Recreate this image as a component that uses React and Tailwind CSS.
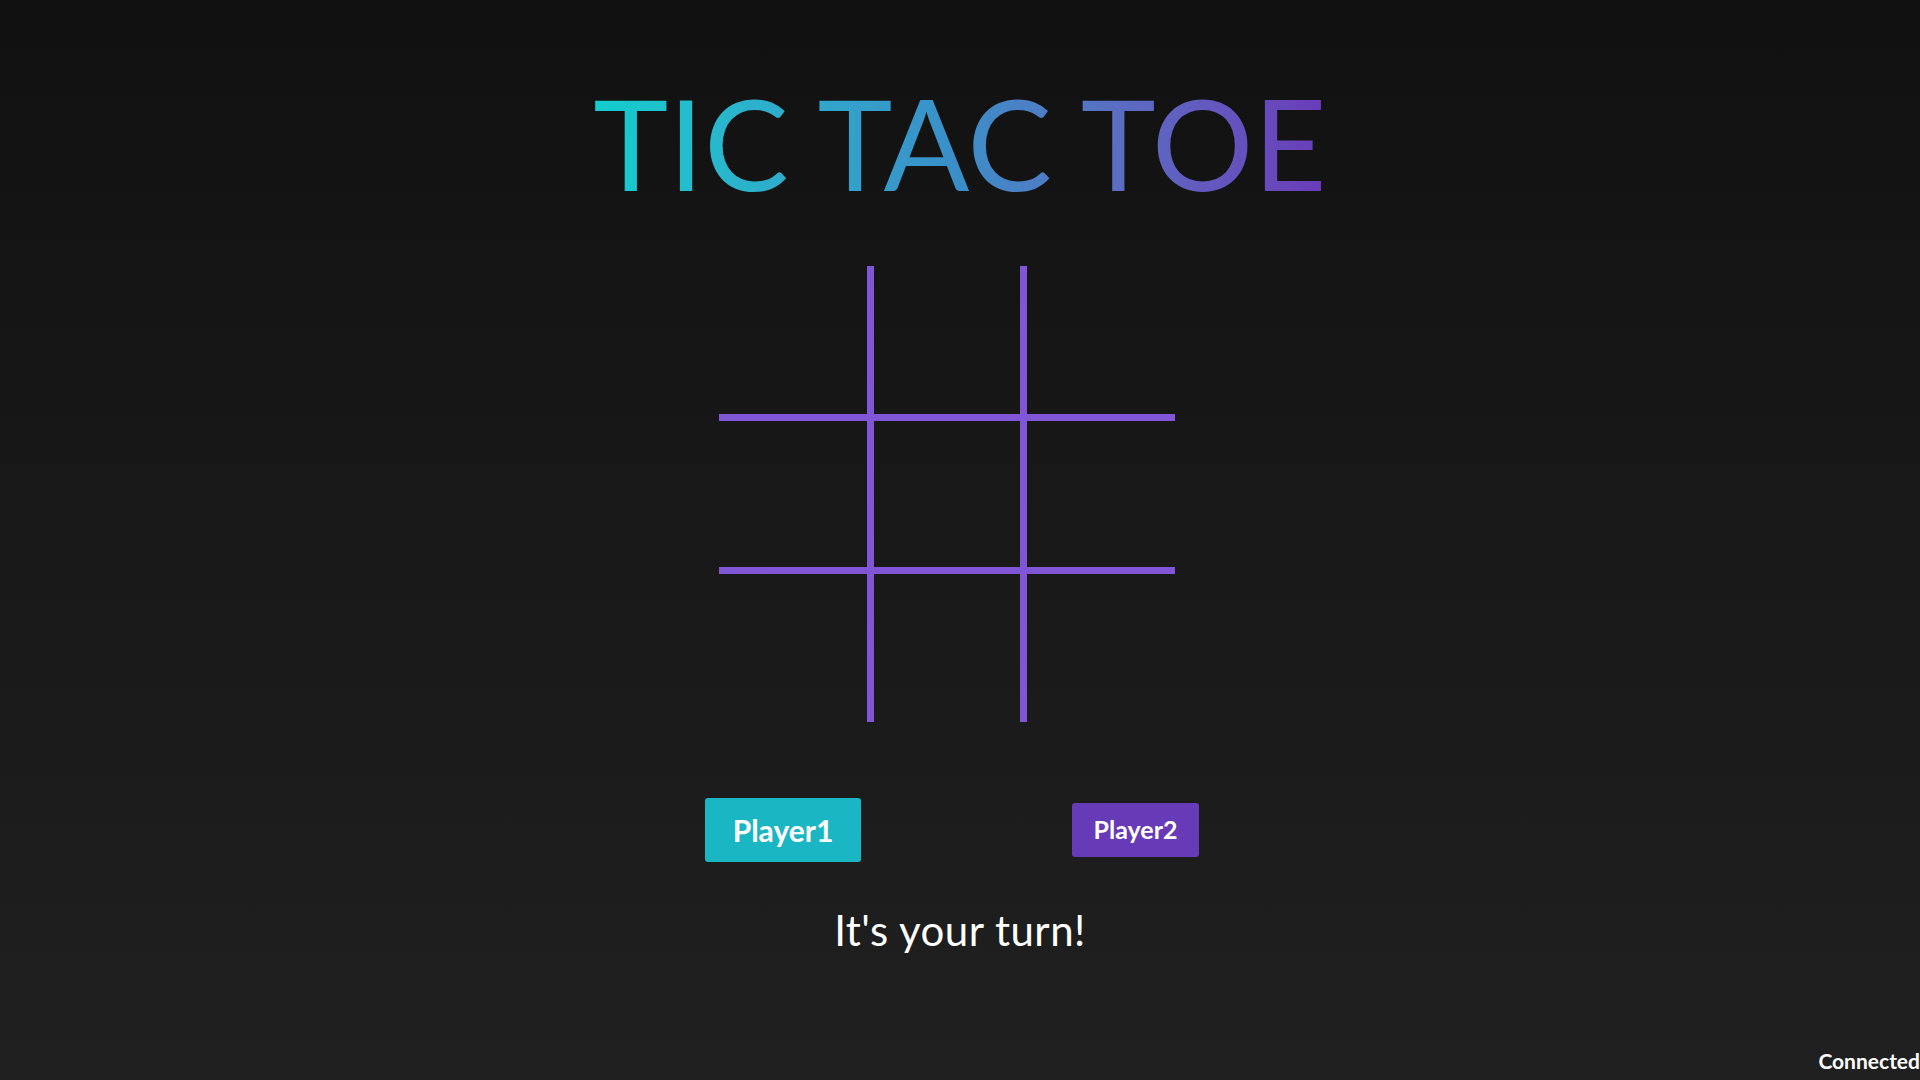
import React, { useState } from 'react';

const LINE = 'border-[#8156d6]';

export default function App() {
  const [board] = useState(Array(9).fill(null));
  const [turn] = useState('player1');

  const cellClass = (i) => {
    const row = Math.floor(i / 3);
    const col = i % 3;
    const w = col === 1 ? 'w-[146px]' : 'w-[148px]';
    const h = row === 1 ? 'h-[146px]' : 'h-[148px]';
    const br = col < 2 ? 'border-r-[7px]' : '';
    const bb = row < 2 ? 'border-b-[7px]' : '';
    return `${w} ${h} ${br} ${bb} ${LINE} box-content flex items-center justify-center`;
  };

  return (
    <div
      className="relative h-screen w-full overflow-hidden bg-linear-to-b from-[#111111] to-[#202020] text-white"
      style={{ fontFamily: 'Lato, "Noto Sans", sans-serif' }}
    >
      <div className="flex flex-col items-center">
        <h1 className="mt-[79px] w-fit bg-linear-to-r from-[#0fcdcd] via-[#3a8ec8] to-[#6a3ab9] bg-clip-text text-[127px] leading-none font-normal text-transparent">
          TIC TAC TOE
        </h1>

        <div className="mt-[60px] mr-[27px] flex flex-wrap w-[456px]">
          {board.map((v, i) => (
            <div key={i} className={cellClass(i)}>{v}</div>
          ))}
        </div>

        <div className="mt-[76px] mr-[16px] flex h-[64px] items-center gap-[211px]">
          <button
            className={`h-[64px] w-[156px] rounded-[3px] bg-[#1bb6c4] text-[30px] font-bold text-white ${turn === 'player1' ? '' : 'opacity-80'}`}
          >
            Player1
          </button>
          <button className="h-[54px] w-[127px] rounded-[3px] bg-[#673ab7] text-[25px] font-bold text-white">
            Player2
          </button>
        </div>

        <p className="mt-[47px] text-[42px] leading-none tracking-[0.5px] text-white">It's your turn!</p>
      </div>

      <div className="absolute right-0 bottom-[6px] text-[21px] font-bold leading-tight text-white">Connected</div>
    </div>
  );
}
